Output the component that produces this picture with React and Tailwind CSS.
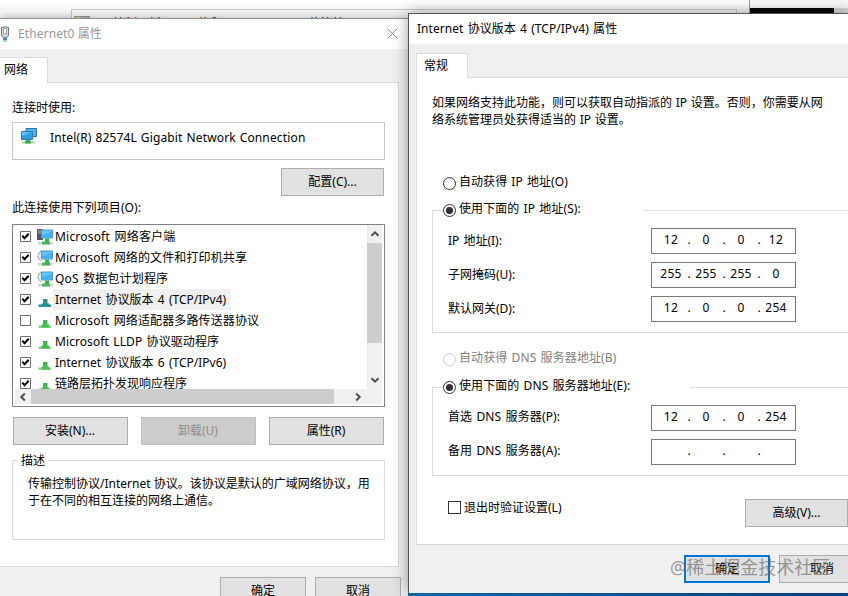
import React from "react";

const FONT = "font-['Noto_Sans','Noto_Sans_CJK_SC',sans-serif]";

function Button({ children, className = "" }) {
  return (
    <button
      className={`flex h-7 shrink-0 items-center justify-center border border-[#adadad] bg-[#e1e1e1] text-black ${className}`}
    >
      {children}
    </button>
  );
}

function Tab({ children, className = "" }) {
  return <div className={`relative z-10 -mb-px border border-b-0 border-[#d9d9d9] bg-white ${className}`}>{children}</div>;
}

function PlugIcon() {
  return (
    <svg className="h-4 w-2.5 shrink-0" viewBox="0 0 10 16" fill="none">
      <path d="M1.500 1.500Q5 0 8.500 1.500V9Q8.500 11.500 5 11.500T1.500 9Z" fill="#dfe3e8" stroke="#6c7781" />
      <path d="M3.500 2.500H6.500V8H3.500Z" fill="#fff" stroke="#7b8791" strokeWidth=".8" />
      <path d="M3 12H7V14H3Z" fill="#3b8fc4" />
      <path d="M4 14V16M6 14V16" stroke="#43a6da" />
    </svg>
  );
}

function AdapterIcon() {
  return (
    <svg className="h-4 w-4 shrink-0" viewBox="0 0 16 16">
      <path d="M5 .5H15.500V8.500H5Z" fill="#48b4ef" stroke="#33719a" />
      <path d="M.5 3.500H11.500V11.500H.5Z" fill="#5bc1f6" stroke="#2f78a8" />
      <path d="M1 8L11 4V11H1Z" fill="#319fe2" />
      <path d="M5 12H9V14H5Z" fill="#3fa866" />
      <path d="M1 13.500H14V15.500H1Z" fill="#a9d8b0" />
      <path d="M4 13H10V15.500H4Z" fill="#3fae4d" />
    </svg>
  );
}

function ClientIcon({ kind }) {
  return (
    <svg className="h-4 w-4 shrink-0" viewBox="0 0 16 16">
      {kind === "client" ? (
        <g>
          <path d="M0 0H6V11H0Z" fill="#555b60" />
          <path d="M1 2H4M1 4H4" stroke="#a9afb4" />
        </g>
      ) : (
        <path
          d="M4.500 1L3 1.500L2.500 3L1 3.500L1.500 5L.5 6L1.500 7.500L1.500 9L3 9.500L4 11"
          fill="#e9edf0"
          stroke="#8d979e"
          strokeDasharray="2 .6"
        />
      )}
      <path d="M4.500 1H15.500V9H4.500Z" fill="#62c6fa" stroke="#4d9cc6" />
      <path d="M5 6.500L15 2.500V8.500H5Z" fill="#45b1f2" />
      <path d="M8 9.500H12V13H8Z" fill="#36b34a" />
      <path d="M1 13H16V15.500H1Z" fill="#d3d7d4" />
      <path d="M5 12.500H13V15.500H5Z" fill="#42b956" />
    </svg>
  );
}

function ProtocolIcon({ selected }) {
  return (
    <svg className="h-4 w-4 shrink-0" viewBox="0 0 16 16">
      <path d="M6 7H10.500V12H6Z" fill={selected ? "#2a9385" : "#3fb950"} />
      <path d="M1.500 12.500H14V15H1.500Z" fill={selected ? "#2f86a6" : "#8fcf96"} />
      <path d="M4.500 11.500H12V14.500H4.500Z" fill={selected ? "#239488" : "#45bd55"} />
    </svg>
  );
}

function Check({ checked }) {
  return (
    <svg className="h-[11px] w-[11px] shrink-0" viewBox="0 0 11 11" fill="none">
      <path d="M.5 .5H10.500V10.500H.5Z" fill="#fff" stroke="#707070" />
      {checked && <path d="M2.300 4.700L4.500 7.200L8.700 2.700" stroke="#000" strokeWidth="2" />}
    </svg>
  );
}

function Chevron({ className = "" }) {
  return (
    <svg className={`h-2.5 w-2.5 ${className}`} viewBox="0 0 10 10" fill="none">
      <path d="M1.500 6.800L5 3.300L8.500 6.800" stroke="#505050" strokeWidth="2" />
    </svg>
  );
}

function Radio({ checked, disabled }) {
  return (
    <svg className="h-[13px] w-[13px] shrink-0" viewBox="0 0 13 13">
      <circle cx="6.500" cy="6.500" r="6" fill="#fff" stroke={disabled ? "#cccccc" : "#333"} />
      {checked && <circle cx="6.500" cy="6.500" r="3.600" fill="#333" />}
    </svg>
  );
}

const ITEMS = [
  { text: "Microsoft 网络客户端", icon: "client", on: true, spacing: "tracking-[0.2px]" },
  { text: "Microsoft 网络的文件和打印机共享", icon: "service", on: true, spacing: "tracking-[0.12px]" },
  { text: "QoS 数据包计划程序", icon: "service", on: true, spacing: "tracking-[0.15px]" },
  { text: "Internet 协议版本 4 (TCP/IPv4)", icon: "protocol", on: true, selected: true, spacing: "tracking-[0px]" },
  { text: "Microsoft 网络适配器多路传送器协议", icon: "protocol", on: false, spacing: "tracking-[0.12px]" },
  { text: "Microsoft LLDP 协议驱动程序", icon: "protocol", on: true, spacing: "tracking-[0.08px]" },
  { text: "Internet 协议版本 6 (TCP/IPv6)", icon: "protocol", on: true, spacing: "tracking-[0px]" },
  { text: "链路层拓扑发现响应程序", icon: "protocol", on: true, spacing: "tracking-[0px]" },
];

function ListRow({ item }) {
  return (
    <div className="flex h-[21px] shrink-0 items-center pl-[7px]">
      <Check checked={item.on} />
      <div className="ml-1.5 mt-px flex">
        {item.icon === "protocol" ? <ProtocolIcon selected={item.selected} /> : <ClientIcon kind={item.icon} />}
      </div>
      <span
        className={`flex h-[21px] items-center whitespace-nowrap pl-[2px] pr-[5px] [word-spacing:1.2px] ${item.spacing} ${item.selected ? "bg-[#f0f0f0]" : ""}`}
      >
        {item.text}
      </span>
    </div>
  );
}

function ComponentList() {
  return (
    <div className="flex h-[183px] shrink-0 flex-col border border-[#828282] bg-white pr-0.5">
      <div className="flex h-[164px]">
        <div className="flex min-w-0 flex-1 flex-col overflow-hidden pt-px">
          {ITEMS.map((item) => (
            <ListRow key={item.text} item={item} />
          ))}
        </div>
        <div className="flex w-[15px] flex-col items-center bg-[#f0f0f0]">
          <div className="flex h-[18px] items-center">
            <Chevron />
          </div>
          <div className="h-[100px] w-full bg-[#cdcdcd]" />
          <div className="mt-auto flex h-[18px] items-center">
            <Chevron className="rotate-180" />
          </div>
        </div>
      </div>
      <div className="ml-0.5 flex h-[15px] items-center bg-[#f0f0f0]">
        <div className="flex w-4 justify-center">
          <Chevron className="-rotate-90" />
        </div>
        <div className="h-full w-[303px] bg-[#cdcdcd]" />
        <Chevron className="ml-[19px] rotate-90" />
      </div>
    </div>
  );
}

function EthernetWindow() {
  return (
    <section className="absolute left-0 top-[18px] flex h-[600px] w-[408px] flex-col border-t border-[#8e8e8e] bg-[#f0f0f0] shadow-[0_0_10px_rgba(0,0,0,0.3)]">
      <header className="flex h-[30px] shrink-0 items-center bg-white text-[#999]">
        <PlugIcon />
        <h1 className="ml-2 flex-1 tracking-[0.1px]">Ethernet0 属性</h1>
        <svg className="-mt-px mr-[10px] h-[11px] w-[11px]" viewBox="0 0 11 11" stroke="#8a8a8a">
          <path d="M.5 .5L10.500 10.500M10.500 .5L.5 10.500" />
        </svg>
      </header>
      <Tab className="mt-2 flex h-[26px] w-12 items-center border-l-0 pl-1">
        <span className="-mt-0.5">网络</span>
      </Tab>
      <div className="flex h-[485px] w-[399px] shrink-0 flex-col border border-l-0 border-[#d9d9d9] bg-white pl-3 pr-[13px] pt-4">
        <div className="h-[18px] leading-[18px]">连接时使用:</div>
        <div className="mt-[5px] flex h-[38px] shrink-0 items-start border border-[#c8c8c8] pl-2">
          <div className="mt-[5px] flex">
            <AdapterIcon />
          </div>
          <span className="ml-[13px] mt-[6px] leading-[18px] tracking-[0.15px] [word-spacing:0.6px]">
            Intel(R) 82574L Gigabit Network Connection
          </span>
        </div>
        <Button className="mr-px mt-2 w-[103px] self-end">配置(C)...</Button>
        <div className="mb-[7px] mt-[3px] h-[18px] leading-[18px] tracking-[0.1px]">此连接使用下列项目(O):</div>
        <ComponentList />
        <div className="ml-px mr-px mt-[10px] flex justify-between">
          <Button className="w-[115px] pr-px">安装(N)...</Button>
          <Button className="w-[115px] border-[#bfbfbf]! bg-[#cccccc]! pr-px text-[#8c8c8c]!">卸载(U)</Button>
          <Button className="w-[115px] pr-px">属性(R)</Button>
        </div>
        <fieldset className="mt-[6px] h-[90px]">
          <div className="flex h-[18px] items-center">
            <div className="h-[9px] w-1.5 self-end border-l border-t border-[#dcdcdc]" />
            <span className="mx-[3px] pt-0.5 leading-[18px]">描述</span>
            <div className="h-[9px] flex-1 self-end border-r border-t border-[#dcdcdc]" />
          </div>
          <p className="h-[71px] whitespace-nowrap border border-t-0 border-[#dcdcdc] pl-[15px] pt-[6px] leading-[17px]">
            传输控制协议/Internet 协议。该协议是默认的广域网络协议，用
            <br />
            于在不同的相互连接的网络上通信。
          </p>
        </fieldset>
      </div>
      <footer className="mt-[10px] flex justify-end gap-[9px] pr-[7px]">
        <Button className="w-[86px]">确定</Button>
        <Button className="w-[86px]">取消</Button>
      </footer>
    </section>
  );
}

function IpInput({ value }) {
  return (
    <div className="flex h-[26px] w-[145px] shrink-0 items-center border border-[#7a7a7a] bg-white pb-0.5 pl-[5px]">
      {value.map((octet, i) => (
        <React.Fragment key={i}>
          {i > 0 && <span className="w-[7px] pl-px text-center">.</span>}
          <span className="w-7 text-center tracking-[0.3px]">{octet}</span>
        </React.Fragment>
      ))}
    </div>
  );
}

function Field({ label, value, labelClass = "" }) {
  return (
    <div className="flex h-[26px] items-center">
      <label className={`w-[203px] whitespace-nowrap [word-spacing:1px] ${labelClass}`}>{label}</label>
      <IpInput value={value} />
    </div>
  );
}

function RadioGroup({ label, labelClass, children, className }) {
  return (
    <div className={className}>
      <div className="flex h-[18px] items-center">
        <div className="h-[9px] w-[11px] self-end border-l border-t border-[#dcdcdc]" />
        <Radio checked />
        <span className={`-mt-0.5 ml-[3px] whitespace-nowrap tracking-[0.08px] [word-spacing:1px] ${labelClass}`}>
          {label}
        </span>
        <div className="h-[9px] flex-1 self-end border-t border-[#dcdcdc]" />
      </div>
      <div className="flex flex-col gap-2 border-b border-l border-[#dcdcdc] pb-[10px] pl-[15px] pt-[9px]">{children}</div>
    </div>
  );
}

function Ipv4Window() {
  return (
    <section className="absolute left-[408px] top-[13px] flex h-[580px] w-[440px] flex-col border-l border-t border-[#555] bg-[#f0f0f0] shadow-[0_0_14px_rgba(0,0,0,0.4)]">
      <header className="flex h-[30px] shrink-0 items-center bg-white pl-2">
        <h1 className="tracking-[0.04px] [word-spacing:1.1px]">Internet 协议版本 4 (TCP/IPv4) 属性</h1>
      </header>
      <Tab className="ml-[7px] mt-[9px] flex h-[25px] w-[52px] items-center pl-[7px]">
        <span className="-mt-px">常规</span>
      </Tab>
      <div className="ml-[7px] flex h-[468px] shrink-0 flex-col border-b border-l border-t border-[#d9d9d9] bg-white pl-[15px]">
        <p className="mt-[16px] h-[34px] whitespace-nowrap leading-[17px] [word-spacing:0.6px]">
          如果网络支持此功能，则可以获取自动指派的 IP 设置。否则，你需要从网
          <br />
          络系统管理员处获得适当的 IP 设置。
        </p>
        <div className="ml-[11px] mt-[46px] flex h-[18px] items-center">
          <Radio />
          <span className="-mt-0.5 ml-[3px] tracking-[0.05px] [word-spacing:1px]">自动获得 IP 地址(O)</span>
        </div>
        <RadioGroup className="mt-[9px]" label="使用下面的 IP 地址(S):" labelClass="w-[184px]">
          <Field label="IP 地址(I):" value={["12", "0", "0", "12"]} />
          <Field label="子网掩码(U):" value={["255", "255", "255", "0"]} />
          <Field label="默认网关(D):" value={["12", "0", "0", "254"]} />
        </RadioGroup>
        <div className="ml-[11px] mt-[17px] flex h-[18px] items-center text-[#7f7f7f]">
          <Radio disabled />
          <span className="-mt-0.5 ml-[3px] tracking-[0.1px] [word-spacing:1px]">自动获得 DNS 服务器地址(B)</span>
        </div>
        <RadioGroup className="mt-[10px]" label="使用下面的 DNS 服务器地址(E):" labelClass="w-[231px]">
          <Field label="首选 DNS 服务器(P):" labelClass="-mt-0.5 tracking-[0.12px]" value={["12", "0", "0", "254"]} />
          <Field label="备用 DNS 服务器(A):" labelClass="-mt-0.5 tracking-[0.12px]" value={["", "", "", ""]} />
        </RadioGroup>
        <div className="ml-4 mt-[23px] flex h-7 items-center justify-between">
          <div className="flex items-center">
            <div className="mt-[-11px] h-[13px] w-[13px] border border-[#333] bg-white" />
            <span className="ml-[3px] mt-[-10px]">退出时验证设置(L)</span>
          </div>
          <Button className="w-[103px]">高级(V)...</Button>
        </div>
      </div>
      <footer className="mt-[10px] flex gap-[9px] pl-[275px]">
        <Button className="w-[86px] border-2 border-[#0078d7]!">确定</Button>
        <Button className="w-[86px]">取消</Button>
      </footer>
    </section>
  );
}

function BackgroundWindow() {
  return (
    <div className="flex h-[18px] w-[750px] border-r border-[#999] bg-linear-to-b from-white to-[#f3f3f3] pl-[71px] pt-[9px]">
      <div className="flex h-[9px] w-[666px] overflow-hidden border border-b-0 border-[#c9c9c9] bg-[#fafafa]">
        <div className="ml-0.5 mt-1.5 flex h-3 w-4 border border-[#999] bg-[#e8dc7a]">
          <div className="ml-auto h-3 w-2 bg-[#aeb8c8]" />
        </div>
        <div className="ml-[23px] mt-[5px] flex whitespace-nowrap leading-[18px]">
          <span className="w-[73px]">控制面板</span>
          <span className="w-[111px]">网络和 Internet</span>
          <span>网络连接</span>
        </div>
      </div>
    </div>
  );
}

export default function App() {
  return (
    <main
      className={`relative h-[596px] w-[848px] overflow-hidden bg-linear-to-r from-[#0f7cc4] from-50% to-[#084c96] text-[12px] leading-[18px] text-black ${FONT}`}
    >
      <div className="flex h-[18px] bg-[#f8f8f8]">
        <BackgroundWindow />
        <div className="mt-2 h-[10px] w-[84px] bg-[#080808]" />
        <div className="mt-2 h-[10px] flex-1 bg-[#d6d6d6]" />
      </div>
      <EthernetWindow />
      <Ipv4Window />
      <div className="absolute left-[670px] top-[554px] whitespace-nowrap text-[18px] leading-[26px] text-[#666]/65">
        @稀土掘金技术社区
      </div>
    </main>
  );
}
